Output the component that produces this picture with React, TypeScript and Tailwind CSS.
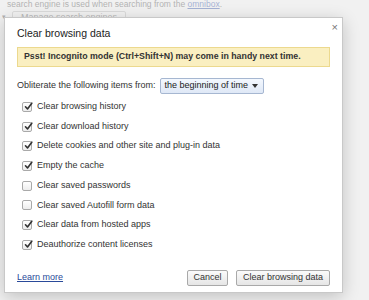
import React from "react";

const items: { label: string; checked: boolean }[] = [
  { label: "Clear browsing history", checked: true },
  { label: "Clear download history", checked: true },
  { label: "Delete cookies and other site and plug-in data", checked: true },
  { label: "Empty the cache", checked: true },
  { label: "Clear saved passwords", checked: false },
  { label: "Clear saved Autofill form data", checked: false },
  { label: "Clear data from hosted apps", checked: true },
  { label: "Deauthorize content licenses", checked: true },
];

function Check({ checked }: { checked: boolean }) {
  return (
    <span className="relative flex h-[10px] w-[10px] shrink-0 items-center justify-center rounded-[2px] border border-[#a9a9a9] bg-gradient-to-b from-white to-[#ededed]">
      {checked && (
        <svg width="9" height="9" viewBox="0 0 9 9" className="absolute left-[1px] top-[-1px]">
          <path d="M1.5 4.8 L3.5 7 L7.8 1.2" fill="none" stroke="#333" strokeWidth="1.6" strokeLinecap="round" strokeLinejoin="round" />
        </svg>
      )}
    </span>
  );
}

export default function App() {
  return (
    <div
      className="relative h-[300px] w-[369px] overflow-hidden bg-[#f1f1f1] text-[#333]"
      style={{ fontFamily: '"Liberation Sans", Arial, sans-serif' }}
    >
      {/* faded page behind */}
      <div className="opacity-40">
        <div className="whitespace-nowrap pl-[7px] text-[8.5px] leading-[9px] text-[#555]">
          search engine is used when searching from the <span className="text-[#3355aa] underline">omnibox</span>.
        </div>
        <div className="mt-[2px] flex items-center gap-[6px] pl-[2px]">
          <span className="text-[7px] text-[#555]">▾</span>
          <span className="rounded-[2px] border border-[#bbb] bg-[#f4f4f4] px-[8px] text-[9px] leading-[10px] text-[#666]">
            Manage search engines
          </span>
        </div>
      </div>

      {/* dialog */}
      <div className="absolute left-[4px] top-[17px] flex h-[276px] w-[339px] flex-col border border-[#c8c8c8] bg-white px-[12px] shadow-[0_4px_16px_rgba(0,0,0,0.2)]">
        <div className="flex items-start justify-between">
          <div className="pt-[8px] text-[10.5px] leading-[14px] text-[#222]">Clear browsing data</div>
          <span className="mr-[-8px] mt-[3px] text-[11px] leading-[12px] text-[#777]">×</span>
        </div>

        <div className="mt-[7px] flex h-[20px] items-center whitespace-nowrap border border-[#ecd98e] bg-[#faefc1] pl-[6px] text-[8.8px] font-bold text-[#333]">
          Psst! Incognito mode (Ctrl+Shift+N) may come in handy next time.
        </div>

        <div className="mt-[11px] flex items-center gap-[4px] whitespace-nowrap text-[9px]">
          <span>Obliterate the following items from:</span>
          <span className="flex h-[16px] w-[104px] items-center justify-between rounded-[2px] border border-[#a6b7d1] bg-gradient-to-b from-[#f4f8fe] to-[#dfe8f6] pl-[4px] pr-[5px] text-[9px] text-[#222]">
            <span>the beginning of time</span>
            <svg width="6" height="4" viewBox="0 0 6 4">
              <path d="M0 0 L6 0 L3 4 Z" fill="#333" />
            </svg>
          </span>
        </div>

        <div className="mt-[3px] flex flex-col pl-[5px]">
          {items.map((it) => (
            <div key={it.label} className="flex h-[19.7px] items-center gap-[5px] whitespace-nowrap text-[9px]">
              <Check checked={it.checked} />
              <span>{it.label}</span>
            </div>
          ))}
        </div>

        <div className="mt-auto mb-[6px] flex items-center">
          <span className="text-[9px] text-[#2a4a9a] underline">Learn more</span>
          <div className="ml-auto flex gap-[8px]">
            <span className="flex h-[16px] w-[41px] items-center justify-center rounded-[2px] border border-[#a9a9a9] bg-gradient-to-b from-[#fbfbfb] to-[#e6e6e6] text-[9px] text-[#333]">
              Cancel
            </span>
            <span className="flex h-[16px] w-[94px] items-center justify-center whitespace-nowrap rounded-[2px] border border-[#a9a9a9] bg-gradient-to-b from-[#fbfbfb] to-[#e6e6e6] text-[9px] text-[#333]">
              Clear browsing data
            </span>
          </div>
        </div>
      </div>
    </div>
  );
}
